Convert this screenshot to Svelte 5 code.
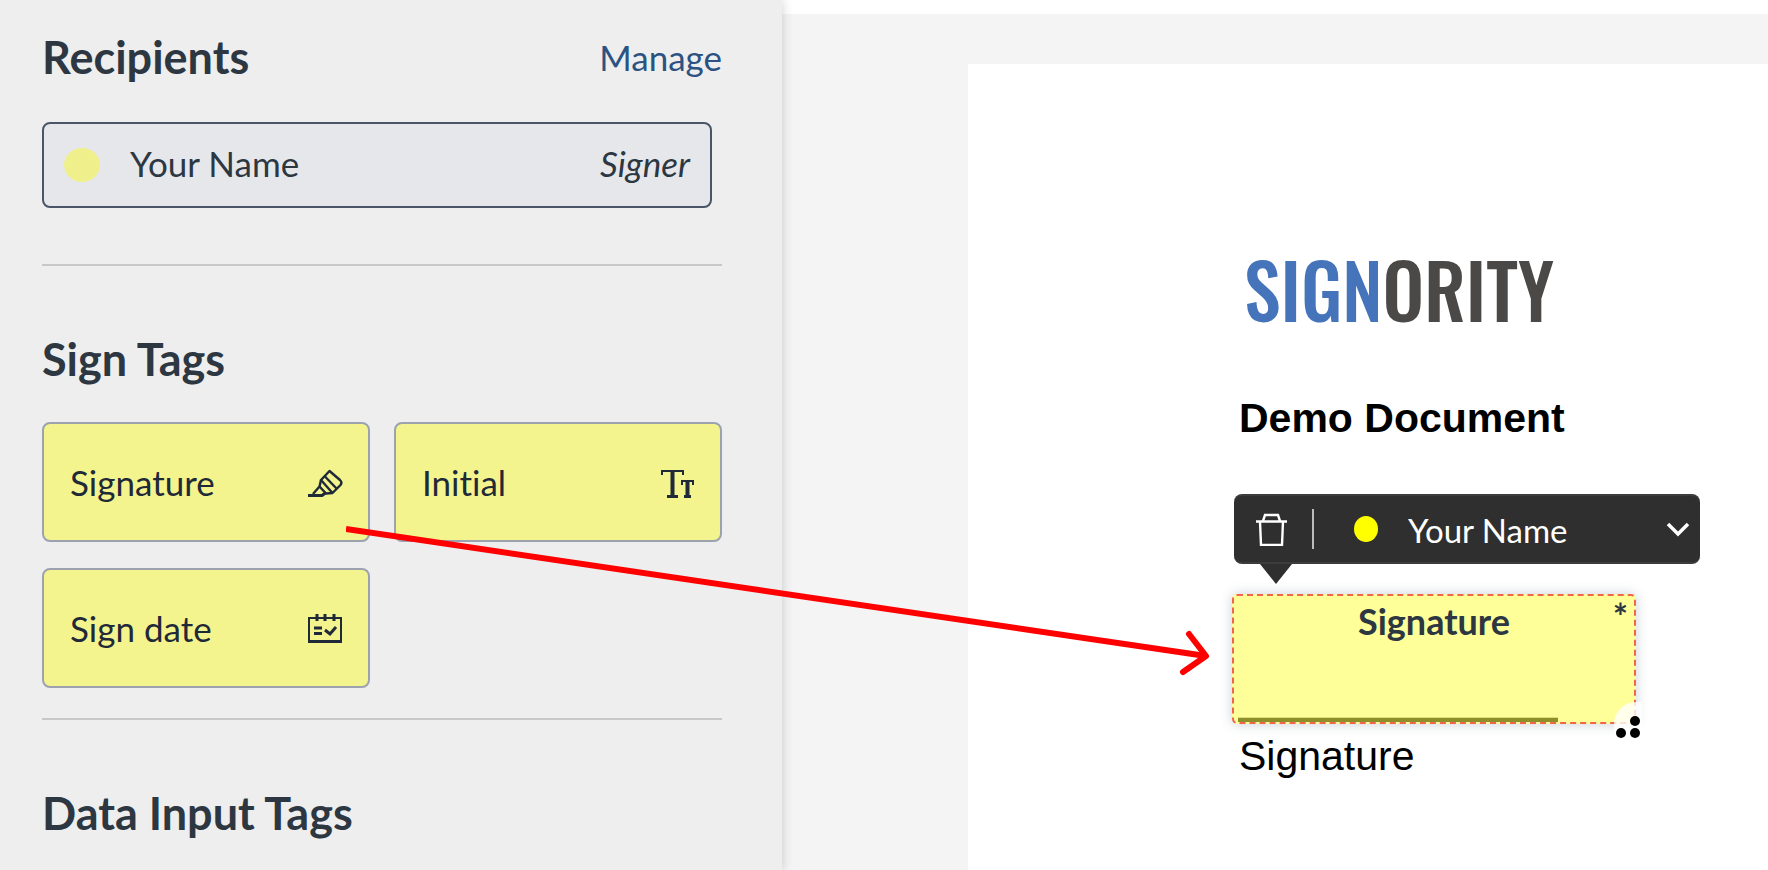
<script>
  const tags = [
    { label: 'Signature', icon: 'marker' },
    { label: 'Initial', icon: 'type' },
    { label: 'Sign date', icon: 'calendar' }
  ];
</script>

<div class="app">
  <aside class="sidebar">
    <header class="head">
      <h2>Recipients</h2>
      <a href="#manage">Manage</a>
    </header>

    <button class="recipient" type="button">
      <span class="swatch"></span>
      <span class="name">Your Name</span>
      <em>Signer</em>
    </button>

    <hr />

    <h2>Sign Tags</h2>
    <div class="tags">
      {#each tags as tag}
        <button class="tag" type="button">
          <span>{tag.label}</span>
          {#if tag.icon === 'marker'}
            <svg width="36" height="32" viewBox="0 0 36 32" fill="none" stroke="currentColor" stroke-width="2.4" stroke-linejoin="round" aria-hidden="true">
              <path d="M21.500 5 L32 14 Q34.500 16.500 32.500 19 L24.500 27 L13 14 Z" />
              <path d="M16.500 10 L28.500 22.500" />
              <path d="M13 14 L11.500 20.500 L18 27.500 L24.500 27 M11.500 20.500 L5 28" />
              <path d="M0 29.500 H14 L18 26.500" stroke-width="3" />
            </svg>
          {:else if tag.icon === 'type'}
            <svg width="36" height="32" viewBox="0 0 36 32" fill="none" stroke="currentColor" aria-hidden="true">
              <path d="M2 9 V5 H23 V9" stroke-width="2" />
              <path d="M12.500 5 V31" stroke-width="4" />
              <path d="M7 30.500 H18" stroke-width="3" />
              <path d="M22 19 V15 H33 V19" stroke-width="2" />
              <path d="M27.500 15 V31" stroke-width="4" />
              <path d="M24 30.500 H31" stroke-width="3" />
            </svg>
          {:else}
            <svg width="36" height="32" viewBox="0 0 36 32" fill="none" stroke="currentColor" stroke-width="2" aria-hidden="true">
              <path d="M1 6 H33 V29 H1 Z" />
              <path d="M0 29.500 H34" stroke-width="3" />
              <path d="M9 2 V9 M17 2 V9 M26 2 V9" stroke-width="3" />
              <path d="M6 16 H14 M6 21.500 H14 M17 18 L22 22 L28 15" stroke-width="3" />
            </svg>
          {/if}
        </button>
      {/each}
    </div>

    <hr class="close" />

    <h2>Data Input Tags</h2>
  </aside>

  <main class="canvas">
    <article class="page">
      <div class="logo"><span>SIGN</span>ORITY</div>
      <h1>Demo Document</h1>

      <div class="toolbar">
        <button class="trash" type="button" aria-label="Delete">
          <svg width="32" height="34" viewBox="0 0 32 34" fill="none" stroke="#fff" stroke-width="2.400" aria-hidden="true">
            <path d="M0 9.500 H31 M7 9 L9 3 H22 L24 9 M4 9.500 L5 33 H26 L27 9.500" />
          </svg>
        </button>
        <span class="bar"></span>
        <span class="dot"></span>
        <select aria-label="Assigned recipient">
          <option>Your Name</option>
        </select>
        <svg class="chevron" width="24" height="16" viewBox="0 0 24 16" fill="none" stroke="#fff" stroke-width="3.500" aria-hidden="true">
          <path d="M2 3 L12 13 L22 3" />
        </svg>
      </div>

      <div class="field">
        <strong>Signature</strong>
        <span class="required">*</span>
        <span class="rule"></span>
        <svg class="handle" width="28" height="38" viewBox="0 0 28 38" aria-hidden="true">
          <path d="M28 0 H22 A22 22 0 0 0 0 22 V38 H28 Z" fill="#fff" fill-opacity="0.8" />
          <g fill="#000">
            <circle cx="21" cy="19" r="5" />
            <circle cx="7" cy="31" r="5" />
            <circle cx="21" cy="31" r="5" />
          </g>
        </svg>
      </div>
      <p>Signature</p>
    </article>
  </main>

  <svg class="pointer" width="870" height="160" viewBox="0 0 870 160" fill="none" stroke="#f00" stroke-width="6" aria-hidden="true">
    <path d="M0 9 L860 136" />
    <path d="M843 114 L860 136 L837 152" stroke-linecap="round" stroke-linejoin="round" />
  </svg>
</div>

<style>
  :global(body) {
    margin: 0;
  }

  .app {
    position: relative;
    display: grid;
    grid-template-columns: minmax(0, 782fr) minmax(0, 986fr);
    min-height: 100vh;
    overflow: hidden;
    background: #fff;
    color: #2d3742;
    font-family: Lato, sans-serif;
    font-size: 35px;
    font-variant-ligatures: none;
    line-height: 44px;
  }

  button,
  select {
    margin: 0;
    color: inherit;
    font: inherit;
    font-variant-ligatures: none;
  }

  .sidebar {
    position: relative;
    z-index: 1;
    box-sizing: border-box;
    padding: 28px 60px 28px 42px;
    background: #eee;
    box-shadow: 0 0 10px rgba(45, 65, 90, 0.25);
  }

  h2 {
    margin: 0;
    font-size: 45px;
    font-weight: 700;
    line-height: 58px;
  }

  .head {
    display: flex;
    align-items: center;
    justify-content: space-between;
  }

  .head a {
    color: #2c5282;
    text-decoration: none;
  }

  .recipient {
    display: flex;
    align-items: center;
    box-sizing: border-box;
    width: calc(100% - 10px);
    height: 86px;
    margin-top: 36px;
    padding: 0 20px;
    border: 2px solid #4a5568;
    border-radius: 8px;
    background: #e5e7eb;
    text-align: left;
  }

  .recipient .name,
  .recipient em {
    padding-bottom: 4px;
  }

  .swatch {
    width: 36px;
    height: 34px;
    border-radius: 50%;
    background: #eff08c;
  }

  .name {
    flex: 1;
    margin-left: 30px;
  }

  hr {
    height: 2px;
    margin: 56px 0 64px;
    border: 0;
    background: #c8c8c8;
  }

  hr.close {
    margin-top: 30px;
  }

  .tags {
    display: grid;
    grid-template-columns: 1fr 1fr;
    gap: 26px 24px;
    margin-top: 34px;
  }

  .tag {
    display: flex;
    align-items: center;
    justify-content: space-between;
    box-sizing: border-box;
    height: 120px;
    padding: 0 24px 0 26px;
    border: 2px solid #9ca3af;
    border-radius: 8px;
    background: #f4f48e;
    color: #1f2937;
  }

  .canvas {
    display: flex;
    margin-top: 14px;
    padding: 50px 0 0 186px;
    background: #f4f4f4;
  }

  .page {
    flex: 1;
    min-width: 0;
    padding: 180px 60px 0 264px;
    background: #fff;
    color: #000;
    font-family: "Liberation Sans", Arial, sans-serif;
    font-size: 41px;
    line-height: 48px;
  }

  .logo {
    padding-left: 12px;
    color: #4a4947;
    font-family: Oswald, Roboto, sans-serif;
    font-size: 74px;
    font-weight: 500;
    line-height: 90px;
    white-space: nowrap;
  }

  .logo span {
    color: #4674bb;
  }

  h1,
  .page p {
    margin: 0;
    padding-left: 7px;
    font-size: 41px;
    font-weight: 400;
    line-height: 48px;
  }

  h1 {
    margin: 60px 0 52px;
    font-weight: 700;
  }

  .page p {
    margin-top: 8px;
  }

  .toolbar {
    position: relative;
    display: flex;
    align-items: center;
    box-sizing: border-box;
    max-width: 466px;
    height: 70px;
    margin: 0 0 30px 2px;
    padding: 0 10px 0 22px;
    border: 2px solid #3c3c3c;
    border-width: 2px 0;
    border-radius: 8px;
    background: #2f2f2f;
    color: #fff;
    font-family: Lato, sans-serif;
    font-size: 33px;
    line-height: 40px;
  }

  .toolbar::after {
    position: absolute;
    top: 68px;
    left: 26px;
    border: 16px solid transparent;
    border-top: 20px solid #2f2f2f;
    border-bottom: 0;
    content: "";
  }

  .trash {
    display: flex;
    padding: 0;
    border: 0;
    background: none;
  }

  .bar {
    width: 2px;
    height: 40px;
    margin: 0 40px 0 24px;
    background: #bbb;
  }

  .dot {
    width: 24px;
    height: 26px;
    margin-right: 30px;
    border-radius: 50%;
    background: #ff0;
  }

  select {
    flex: 1;
    min-width: 0;
    padding: 2px 0 0;
    border: 0;
    appearance: none;
    background: none;
  }

  .chevron {
    flex: none;
  }

  .field {
    position: relative;
    box-sizing: border-box;
    max-width: 404px;
    height: 130px;
    padding-top: 3px;
    border: 2px dashed #f06450;
    border-radius: 5px;
    background: #ff9;
    box-shadow: 0 0 12px rgba(45, 65, 90, 0.25);
    color: #2d3742;
    font-family: Lato, sans-serif;
    font-size: 36px;
    line-height: 44px;
    text-align: center;
  }

  .field strong {
    display: block;
  }

  .required {
    position: absolute;
    top: -2px;
    right: 6px;
    font-weight: 700;
  }

  .rule {
    position: absolute;
    bottom: 0;
    left: 4px;
    width: 320px;
    height: 4px;
    border-top: 1px solid #dede7c;
    background: #8f8f2a;
  }

  .handle {
    position: absolute;
    right: -8px;
    bottom: -18px;
  }

  .pointer {
    position: absolute;
    top: 520px;
    left: 346px;
    z-index: 2;
    pointer-events: none;
  }
</style>
